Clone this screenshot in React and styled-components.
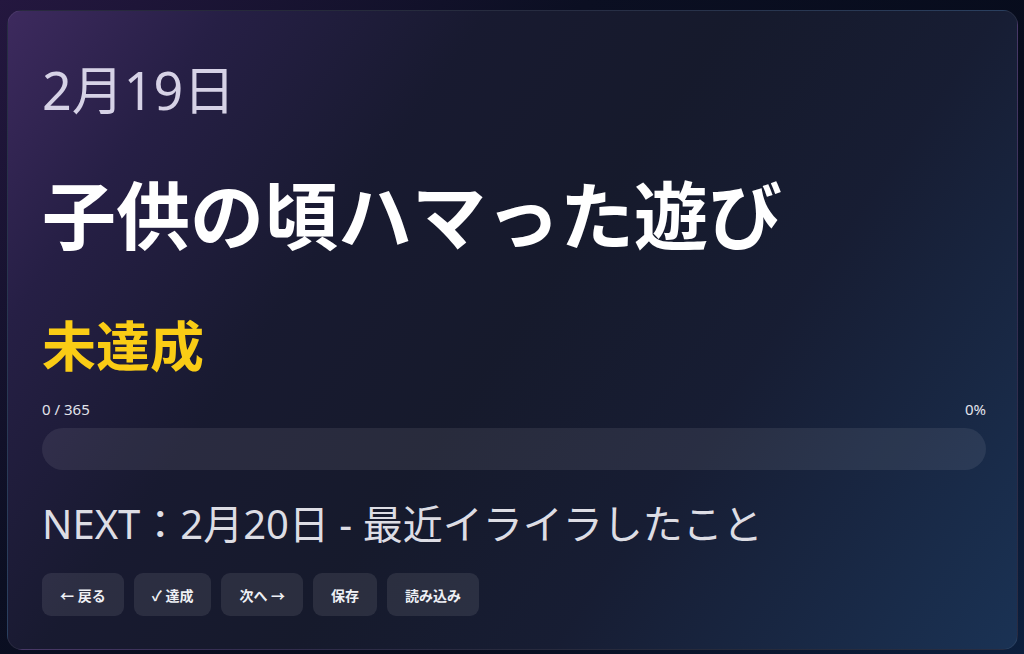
import React from "react";
import styled, { createGlobalStyle } from "styled-components";

const GlobalStyle = createGlobalStyle`
  html, body {
    margin: 0;
    padding: 0;
    height: 100%;
  }
  body {
    background: linear-gradient(135deg, #24173f 0%, #0b0f22 35%, #070c1c 65%, #0c1f3d 100%);
    font-family: "Noto Sans", "Noto Sans CJK JP", sans-serif;
    color: #e5e7eb;
  }
  #root {
    height: 100%;
  }
`;

const Page = styled.div`
  box-sizing: border-box;
  height: 654px;
  padding: 10px 6px 4px 7px;
  display: flex;
`;

const Card = styled.main`
  flex: 1;
  box-sizing: border-box;
  border-radius: 15px;
  border: 1px solid rgba(255, 255, 255, 0.07);
  background: linear-gradient(
    125deg,
    #3d2a5e 0%,
    #261f45 15%,
    #181a30 33%,
    #161a2c 50%,
    #171d33 68%,
    #1a3254 100%
  );
  padding: 48px 31px 0 34px;
  display: flex;
  flex-direction: column;
`;

const DateLabel = styled.div`
  font-size: 52px;
  line-height: 62px;
  font-weight: 400;
  color: #d6d2e6;
`;

const Title = styled.h1`
  margin: 50px 0 0;
  font-size: 74px;
  line-height: 89px;
  font-weight: 700;
  color: #ffffff;
`;

const Status = styled.div`
  margin-top: 54px;
  font-size: 54px;
  line-height: 65px;
  font-weight: 700;
  color: ${(p) => (p.$done ? "#4ade80" : "#facc15")};
`;

const ProgressMeta = styled.div`
  margin-top: 20px;
  display: flex;
  justify-content: space-between;
  font-size: 15px;
  line-height: 20px;
  color: #e2e4ec;
`;

const Track = styled.div`
  margin-top: 9px;
  height: 42px;
  border-radius: 21px;
  background: rgba(255, 255, 255, 0.08);
  overflow: hidden;
`;

const Fill = styled.div`
  height: 100%;
  background: #facc15;
`;

const NextLine = styled.div`
  margin-top: 30px;
  font-size: 40px;
  line-height: 48px;
  font-weight: 400;
  color: #dddde4;
`;

const Actions = styled.div`
  margin-top: 25px;
  display: flex;
  gap: 10px;
`;

const Button = styled.button`
  height: 43px;
  padding: 0 18px;
  border: none;
  border-radius: 9px;
  background: rgba(255, 255, 255, 0.09);
  color: #eef0f5;
  font-family: "Noto Sans", "Noto Sans CJK JP", sans-serif;
  font-size: 14px;
  font-weight: 600;
  cursor: pointer;
`;

export default function App() {
  const done = 0;
  const total = 365;
  const pct = Math.round((done / total) * 100);

  return (
    <>
      <GlobalStyle />
      <Page>
        <Card>
          <DateLabel>2月19日</DateLabel>
          <Title>子供の頃ハマった遊び</Title>
          <Status>未達成</Status>
          <ProgressMeta>
            <span>
              {done} / {total}
            </span>
            <span>{pct}%</span>
          </ProgressMeta>
          <Track>
            <Fill style={{ width: `${pct}%` }} />
          </Track>
          <NextLine>NEXT：2月20日 - 最近イライラしたこと</NextLine>
          <Actions>
            <Button>← 戻る</Button>
            <Button>✓ 達成</Button>
            <Button>次へ →</Button>
            <Button>保存</Button>
            <Button>読み込み</Button>
          </Actions>
        </Card>
      </Page>
    </>
  );
}
